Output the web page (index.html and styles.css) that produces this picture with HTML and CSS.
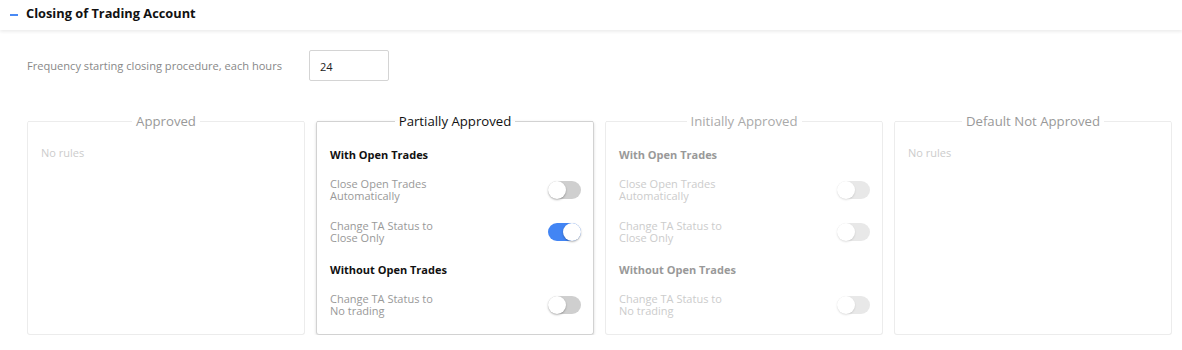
FILE: index.html
```html
<!DOCTYPE html>
<html>
<head>
<meta charset="utf-8">
<link rel="stylesheet" href="styles.css">
</head>
<body>
<div class="header">
  <span class="minus"></span>
  <span class="htitle">Closing of Trading Account</span>
</div>
<div class="content">
  <div class="freq">
    <span class="flabel">Frequency starting closing procedure, each hours</span>
    <div class="finput">24</div>
  </div>
  <div class="cards">
    <div class="card">
      <div class="ctitle"><span>Approved</span></div>
      <div class="norules">No rules</div>
    </div>
    <div class="card active">
      <div class="ctitle"><span>Partially Approved</span></div>
      <div class="sec">With Open Trades</div>
      <div class="row"><div class="rlabel">Close Open Trades<br>Automatically</div><div class="tog"><div class="knob"></div></div></div>
      <div class="row"><div class="rlabel">Change TA Status to<br>Close Only</div><div class="tog on"><div class="knob"></div></div></div>
      <div class="sec sec2">Without Open Trades</div>
      <div class="row"><div class="rlabel">Change TA Status to<br>No trading</div><div class="tog"><div class="knob"></div></div></div>
    </div>
    <div class="card disabled">
      <div class="ctitle"><span>Initially Approved</span></div>
      <div class="sec">With Open Trades</div>
      <div class="row"><div class="rlabel">Close Open Trades<br>Automatically</div><div class="tog"><div class="knob"></div></div></div>
      <div class="row"><div class="rlabel">Change TA Status to<br>Close Only</div><div class="tog"><div class="knob"></div></div></div>
      <div class="sec sec2">Without Open Trades</div>
      <div class="row"><div class="rlabel">Change TA Status to<br>No trading</div><div class="tog"><div class="knob"></div></div></div>
    </div>
    <div class="card">
      <div class="ctitle"><span>Default Not Approved</span></div>
      <div class="norules">No rules</div>
    </div>
  </div>
</div>
</body>
</html>
```
FILE: styles.css
```css
* { box-sizing: border-box; }
body {
  margin: 0;
  font-family: "Open Sans", "Liberation Sans", sans-serif;
  background: #fff;
  color: #222;
}
.header {
  height: 30px;
  display: flex;
  align-items: center;
  padding-left: 10px;
  background: #fff;
  box-shadow: 0 2px 3px rgba(0,0,0,0.07);
  position: relative;
}
.minus {
  width: 8px;
  height: 2px;
  background: #4a8af4;
  margin-right: 8px;
  margin-top: 0;
}
.htitle {
  font-size: 12.8px;
  font-weight: 700;
  color: #111;
  margin-top: -4px;
}
.content {
  padding: 20px 11px 0 27px;
}
.freq {
  display: flex;
  align-items: center;
  height: 31px;
}
.flabel {
  font-size: 11.1px;
  color: #888;
  width: 282px;
}
.finput {
  width: 80px;
  height: 31px;
  border: 1px solid #d4d4d4;
  border-radius: 2px;
  font-size: 11px;
  color: #222;
  padding: 8px 0 0 10px;
}
.cards {
  display: grid;
  grid-template-columns: repeat(4, 278px);
  column-gap: 11px;
  margin-top: 40px;
}
.card {
  height: 214px;
  border: 1px solid #ececec;
  border-top: none;
  border-radius: 3px;
  padding: 0 12px 0 13px;
  position: relative;
}
.card.active {
  border-color: #d2d2d2;
  box-shadow: 0 1px 3px rgba(0,0,0,0.15);
}
.ctitle {
  display: flex;
  align-items: center;
  height: 1px;
  margin: 0 -12px 0 -13px;
  font-size: 13.2px;
  color: #999;
  white-space: nowrap;
}
.ctitle::before, .ctitle::after {
  content: "";
  flex: 1;
  height: 1px;
  background: #ececec;
}
.card.active .ctitle::before, .card.active .ctitle::after { background: #d2d2d2; }
.ctitle span { padding: 0 4px; margin-top: -1px; }
.card.active .ctitle span { color: #111; }
.card.disabled .ctitle span { color: #aaa; }
.norules {
  font-size: 11px;
  color: #ccc;
  margin-top: 23px;
}
.sec {
  font-size: 11px;
  font-weight: 700;
  color: #111;
  margin-top: 25px;
  line-height: 15px;
}
.card.disabled .sec { color: #999; }
.sec2 { margin-top: 18px; }
.row {
  display: flex;
  justify-content: space-between;
  align-items: center;
  margin-top: 16px;
}
.row + .row { margin-top: 18px; }
.rlabel {
  font-size: 11px;
  line-height: 12px;
  color: #999;
}
.card.disabled .rlabel { color: #ccc; }
.tog {
  width: 33px;
  height: 18px;
  border-radius: 9px;
  background: #cfcfcf;
  position: relative;
}
.knob {
  position: absolute;
  top: 0;
  left: 0;
  width: 18px;
  height: 18px;
  border-radius: 50%;
  background: #fff;
  box-shadow: 0 1px 2px rgba(0,0,0,0.3);
}
.tog.on { background: #4285f4; }
.tog.on .knob { left: 15px; }
.card.disabled .tog { background: #e8e8e8; }
.card.disabled .knob { box-shadow: 0 1px 2px rgba(0,0,0,0.12); }
```
